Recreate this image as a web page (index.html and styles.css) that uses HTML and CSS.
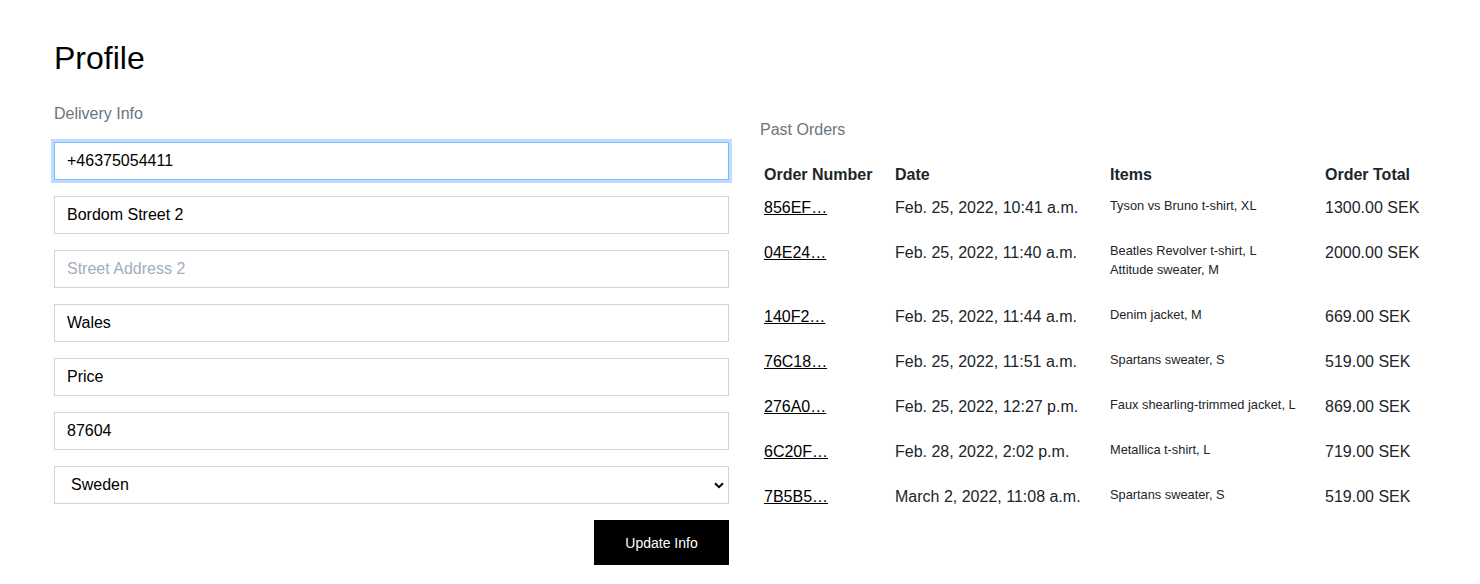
FILE: index.html
```html
<!DOCTYPE html>
<html lang="en">
<head>
<meta charset="utf-8">
<title>Profile</title>
<link rel="stylesheet" href="styles.css">
</head>
<body>
<main class="page">
  <h1 class="title">Profile</h1>
  <div class="columns">
    <section class="left">
      <h2 class="section-label">Delivery Info</h2>
      <form class="form">
        <input class="field focused" type="text" value="+46375054411">
        <input class="field" type="text" value="Bordom Street 2">
        <input class="field" type="text" placeholder="Street Address 2">
        <input class="field" type="text" value="Wales">
        <input class="field" type="text" value="Price">
        <input class="field" type="text" value="87604">
        <select class="field select">
          <option>Sweden</option>
        </select>
        <div class="actions">
          <button type="button" class="btn">Update Info</button>
        </div>
      </form>
    </section>
    <section class="right">
      <h2 class="section-label orders-label">Past Orders</h2>
      <table class="orders">
        <colgroup>
          <col class="c1"><col class="c2"><col class="c3"><col class="c4">
        </colgroup>
        <thead>
          <tr><th>Order Number</th><th>Date</th><th>Items</th><th>Order Total</th></tr>
        </thead>
        <tbody>
          <tr><td><a href="#">856EF…</a></td><td>Feb. 25, 2022, 10:41 a.m.</td><td class="items"><div>Tyson vs Bruno t-shirt, XL</div></td><td>1300.00 SEK</td></tr>
          <tr><td><a href="#">04E24…</a></td><td>Feb. 25, 2022, 11:40 a.m.</td><td class="items"><div>Beatles Revolver t-shirt, L</div><div>Attitude sweater, M</div></td><td>2000.00 SEK</td></tr>
          <tr><td><a href="#">140F2…</a></td><td>Feb. 25, 2022, 11:44 a.m.</td><td class="items"><div>Denim jacket, M</div></td><td>669.00 SEK</td></tr>
          <tr><td><a href="#">76C18…</a></td><td>Feb. 25, 2022, 11:51 a.m.</td><td class="items"><div>Spartans sweater, S</div></td><td>519.00 SEK</td></tr>
          <tr><td><a href="#">276A0…</a></td><td>Feb. 25, 2022, 12:27 p.m.</td><td class="items"><div>Faux shearling-trimmed jacket, L</div></td><td>869.00 SEK</td></tr>
          <tr><td><a href="#">6C20F…</a></td><td>Feb. 28, 2022, 2:02 p.m.</td><td class="items"><div>Metallica t-shirt, L</div></td><td>719.00 SEK</td></tr>
          <tr><td><a href="#">7B5B5…</a></td><td>March 2, 2022, 11:08 a.m.</td><td class="items"><div>Spartans sweater, S</div></td><td>519.00 SEK</td></tr>
        </tbody>
      </table>
    </section>
  </div>
</main>
</body>
</html>
```

FILE: styles.css
```css
* { box-sizing: border-box; }
html, body {
  margin: 0;
  background: #fff;
  color: #212529;
  font-family: "Liberation Sans", Arial, Helvetica, sans-serif;
  font-size: 16px;
  line-height: 1.5;
}
.page {
  padding: 39px 0 0 54px;
}
.title {
  margin: 0;
  font-size: 32px;
  font-weight: 400;
  line-height: 38px;
  color: #000;
}
.columns {
  display: flex;
  align-items: flex-start;
  gap: 31px;
  margin-top: 25px;
}
.left { width: 675px; flex: none; }
.right { width: 680px; flex: none; }
.section-label {
  margin: 0 0 16px;
  font-size: 16px;
  font-weight: 400;
  line-height: 24px;
  color: #6c757d;
}
.orders-label { margin: 16px 0 0; }
.form {
  display: flex;
  flex-direction: column;
  gap: 16px;
}
.field {
  display: block;
  width: 100%;
  height: 38px;
  padding: 6px 12px;
  font-family: inherit;
  font-size: 16px;
  line-height: 24px;
  color: #000;
  background: #fff;
  border: 1px solid #ced4da;
  border-radius: 0;
  outline: none;
}
.field::placeholder { color: #a0aec0; }
.field.focused {
  border-color: #80bdff;
  box-shadow: 0 0 0 3px rgba(0, 123, 255, 0.25);
}
.select {
  appearance: none;
  -webkit-appearance: none;
  padding-left: 16px;
  background-image: url("data:image/svg+xml,%3Csvg xmlns='http://www.w3.org/2000/svg' width='10' height='7' viewBox='0 0 10 7'%3E%3Cpath d='M1 1.2 5 5.2 9 1.2' fill='none' stroke='%23000' stroke-width='2'/%3E%3C/svg%3E");
  background-repeat: no-repeat;
  background-position: right 4px center;
}
.actions {
  display: flex;
  justify-content: flex-end;
}
.btn {
  width: 135px;
  height: 45px;
  border: 0;
  border-radius: 0;
  background: #000;
  color: #fff;
  font-family: inherit;
  font-size: 14px;
}
.orders {
  margin-top: 18px;
  width: 680px;
  border-collapse: collapse;
  table-layout: fixed;
}
.c1 { width: 131px; }
.c2 { width: 215px; }
.c3 { width: 215px; }
.c4 { width: 119px; }
.orders th {
  text-align: left;
  font-weight: 700;
  padding: 4px 4px 0;
  line-height: 21px;
  color: #212529;
}
.orders td {
  vertical-align: top;
  padding: 11px 4px 9px;
  line-height: 24.8px;
  white-space: nowrap;
}
.orders td.items {
  font-size: 12.8px;
  line-height: 19px;
  padding-top: 11px;
  padding-bottom: 15px;
}
.orders a { color: #000; text-decoration: underline; }
```
